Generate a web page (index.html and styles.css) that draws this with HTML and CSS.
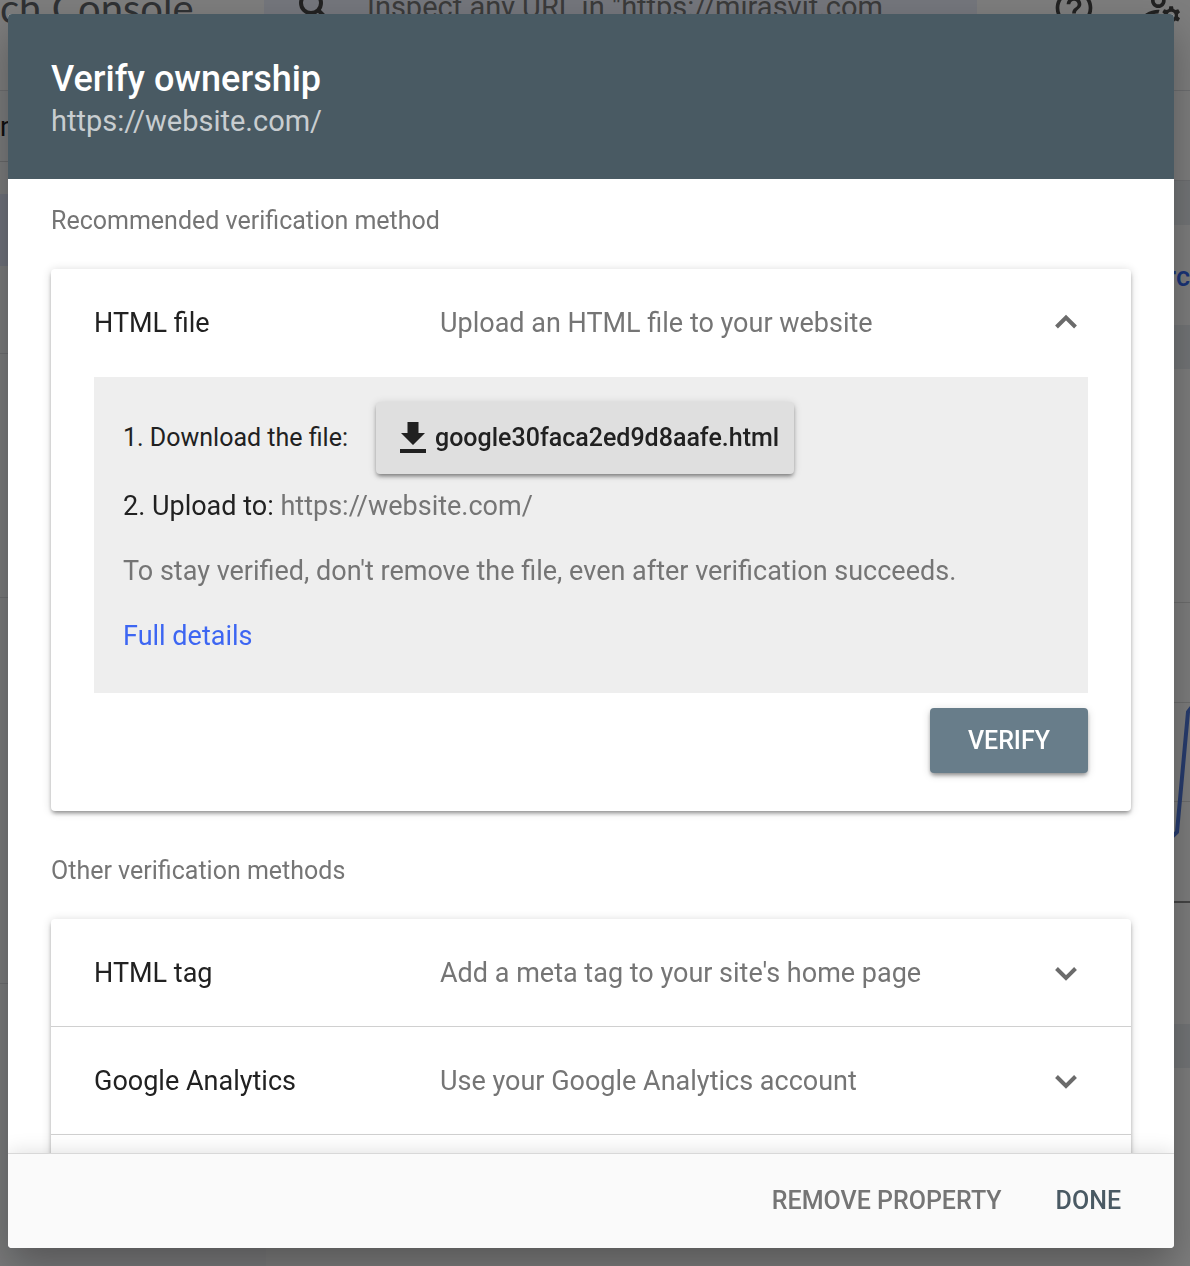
FILE: index.html
```html
<!DOCTYPE html>
<html lang="en">
<head>
<meta charset="utf-8">
<meta name="viewport" content="width=device-width, initial-scale=1">
<title>Verify ownership</title>
<link rel="stylesheet" href="styles.css">
</head>
<body>
<div class="app" aria-hidden="true">
  <header class="topbar">
    <div class="brand">ch Console</div>
    <div class="search">
      <svg class="search-icon" viewBox="0 0 30 30"><circle cx="12" cy="11" r="10"/><path d="M19 18l9 9"/></svg>
      <span class="search-text">Inspect any URL in "https://mirasvit.com</span>
    </div>
    <div class="tools">
      <svg class="tool-icon" viewBox="0 0 24 24"><path d="M11 18h2v-2h-2v2zm1-16C6.48 2 2 6.48 2 12s4.48 10 10 10 10-4.48 10-10S17.52 2 12 2zm0 18c-4.41 0-8-3.59-8-8s3.59-8 8-8 8 3.59 8 8-3.59 8-8 8zm0-14c-2.21 0-4 1.79-4 4h2c0-1.1.9-2 2-2s2 .9 2 2c0 2-3 1.75-3 5h2c0-2.25 3-2.5 3-5 0-2.21-1.79-4-4-4z"/></svg>
      <svg class="tool-icon" viewBox="0 0 24 24"><path d="M4 18v-.65c0-.34.16-.66.41-.81C6.1 15.53 8.03 15 10 15c.03 0 .05 0 .08.01.1-.7.3-1.37.59-1.98-.22-.02-.44-.03-.67-.03-2.42 0-4.68.67-6.61 1.82-.88.52-1.39 1.5-1.39 2.53V20h9.26c-.42-.6-.75-1.28-.97-2H4zM10 12c2.21 0 4-1.79 4-4s-1.79-4-4-4-4 1.79-4 4 1.79 4 4 4zm0-6c1.1 0 2 .9 2 2s-.9 2-2 2-2-.9-2-2 .9-2 2-2zM20.75 16c0-.22-.03-.42-.06-.63l1.14-1.01-1-1.73-1.45.49c-.32-.27-.68-.48-1.08-.63L18 11h-2l-.3 1.49c-.4.15-.76.36-1.08.63l-1.45-.49-1 1.73 1.14 1.01c-.03.21-.06.41-.06.63s.03.42.06.63l-1.14 1.01 1 1.73 1.45-.49c.32.27.68.48 1.08.63L16 21h2l.3-1.49c.4-.15.76-.36 1.08-.63l1.45.49 1-1.73-1.14-1.01c.03-.21.06-.41.06-.63zM17 18c-1.1 0-2-.9-2-2s.9-2 2-2 2 .9 2 2-.9 2-2 2z"/></svg>
    </div>
  </header>
  <div class="columns">
    <nav class="sidebar">
      <div class="property">n</div>
      <div class="nav-group"><div class="nav-active"></div></div>
      <div class="nav-group nav-tall"></div>
      <div class="nav-group nav-taller"></div>
    </nav>
    <main class="content">
      <div class="title-row"></div>
      <div class="band"></div>
      <div class="export">rc</div>
      <div class="band"></div>
      <div class="chart">
        <svg class="chart-line" viewBox="0 0 16 140"><path d="M-2 133L3 128 14 8 20 0"/></svg>
      </div>
      <div class="band"></div>
    </main>
  </div>
</div>

<div class="scrim">
  <section class="dialog" role="dialog" aria-modal="true" aria-labelledby="dialog-title">
    <header class="dialog-header">
      <h1 class="dialog-title" id="dialog-title">Verify ownership</h1>
      <p class="dialog-site">https://website.com/</p>
    </header>

    <div class="dialog-body">
      <h2 class="section-label">Recommended verification method</h2>
      <div class="card">
        <button class="method" type="button" aria-expanded="true">
          <span class="method-name">HTML file</span>
          <span class="method-info">Upload an HTML file to your website</span>
          <svg class="chevron" viewBox="0 0 24 24"><path d="M2.500 16L12 6.500l9.500 9.500"/></svg>
        </button>
        <div class="method-detail">
          <div class="instructions">
            <div class="download-row">
              <span>1. Download the file:</span>
              <button class="download" type="button">
                <svg class="download-icon" viewBox="0 0 26 32"><path d="M7.500 0h11v11H25L13 23 1 11h6.500zM0 27h26v4H0z"/></svg>
                google30faca2ed9d8aafe.html
              </button>
            </div>
            <p class="step">2. Upload to: <span class="muted">https://website.com/</span></p>
            <p class="note muted">To stay verified, don't remove the file, even after verification succeeds.</p>
            <p class="note"><a class="link" href="#details">Full details</a></p>
          </div>
          <button class="verify" type="button">VERIFY</button>
        </div>
      </div>

      <h2 class="section-label section-label-next">Other verification methods</h2>
      <div class="card">
        <button class="method method-closed" type="button" aria-expanded="false">
          <span class="method-name">HTML tag</span>
          <span class="method-info">Add a meta tag to your site's home page</span>
          <svg class="chevron" viewBox="0 0 24 24"><path d="M2.500 7.500L12 17l9.500-9.500"/></svg>
        </button>
        <button class="method method-closed" type="button" aria-expanded="false">
          <span class="method-name">Google Analytics</span>
          <span class="method-info">Use your Google Analytics account</span>
          <svg class="chevron" viewBox="0 0 24 24"><path d="M2.500 7.500L12 17l9.500-9.500"/></svg>
        </button>
        <div class="method"></div>
      </div>
    </div>

    <footer class="dialog-footer">
      <button class="action" type="button">REMOVE PROPERTY</button>
      <button class="action action-primary" type="button">DONE</button>
    </footer>
  </section>
</div>
</body>
</html>
```
FILE: styles.css
```css
* {
  box-sizing: border-box;
}

body {
  margin: 0;
  height: 100vh;
  overflow: hidden;
  font-family: Roboto, "Liberation Sans", sans-serif;
  font-size: 27px;
  line-height: 32px;
  color: #212121;
}

h1,
h2,
p {
  margin: 0;
  font-weight: 400;
}

button {
  font: inherit;
  color: inherit;
  border: 0;
  background: none;
  cursor: pointer;
}

/* Page behind the dialog */

.app {
  display: flex;
  flex-direction: column;
  min-height: 100vh;
  background: #fafafa;
}

.topbar {
  display: flex;
  align-items: flex-start;
  height: 91px;
  border-bottom: 1px solid #dadce0;
}

.brand {
  width: 264px;
  font-family: Lato, sans-serif;
  font-size: 40px;
  line-height: 16px;
  white-space: nowrap;
  color: #5f6368;
}

.search {
  flex: 1;
  display: flex;
  align-items: flex-start;
  gap: 38px;
  height: 56px;
  padding-left: 35px;
  background: #e9edf8;
}

.search-icon {
  flex: none;
  width: 30px;
  height: 30px;
  margin-top: -8px;
  fill: none;
  stroke: #444;
  stroke-width: 4;
}

.search-text {
  line-height: 14px;
  font-size: 29px;
  white-space: nowrap;
  color: #757575;
}

.tools {
  display: flex;
  gap: 44px;
  width: 213px;
  padding-left: 75px;
}

.tool-icon {
  flex: none;
  width: 44px;
  height: 44px;
  margin-top: -14px;
  fill: #444;
}

.columns {
  flex: 1;
  display: flex;
}

.sidebar {
  width: 266px;
  background: #f4f5f7;
}

.property {
  height: 71px;
  padding-top: 20px;
  border-bottom: 1px solid #cfd1d4;
}

.nav-group {
  height: 192px;
  padding-top: 32px;
  border-bottom: 1px solid #dadce0;
}

.nav-tall {
  height: 244px;
}

.nav-taller {
  height: 386px;
}

.nav-active {
  height: 72px;
  background: #dde3f5;
}

.content {
  flex: 1;
}

.title-row {
  height: 90px;
  border-bottom: 1px solid #dadce0;
}

.band {
  height: 44px;
  background: #e6eaee;
}

.export {
  height: 100px;
  padding-top: 36px;
  text-align: right;
  font-size: 27px;
  font-weight: 500;
  color: #3367f0;
}

.chart {
  display: flex;
  justify-content: flex-end;
  height: 655px;
  padding-top: 335px;
  background: linear-gradient(#dadada 0 0) 0 233px / 100% 1px no-repeat,
    linear-gradient(#dadada 0 0) 0 333px / 100% 1px no-repeat,
    linear-gradient(#dadada 0 0) 0 432px / 100% 1px no-repeat,
    linear-gradient(#8a8a8a 0 0) 0 532px / 100% 2px no-repeat;
}

.chart-line {
  width: 16px;
  height: 140px;
  fill: none;
  stroke: #4f78dc;
  stroke-width: 4;
}

/* Dialog */

.scrim {
  position: fixed;
  inset: 0;
  display: flex;
  padding: 14px 16px 18px 8px;
  background: rgba(0, 0, 0, 0.5);
}

.dialog {
  flex: 1;
  display: flex;
  flex-direction: column;
  min-width: 0;
  overflow: hidden;
  border-radius: 4px;
  background: #fff;
  box-shadow: 0 18px 40px rgba(0, 0, 0, 0.3);
}

.dialog-header {
  padding: 43px 43px 38px;
  color: #fff;
  background: #495a63;
}

.dialog-title {
  font-size: 36px;
  font-weight: 500;
  line-height: 44px;
}

.dialog-site {
  font-size: 29px;
  line-height: 40px;
  color: #c8cdd0;
}

.dialog-body {
  flex: 1;
  min-height: 0;
  padding: 26px 43px 0;
  overflow-y: auto;
  scrollbar-width: none;
}

.section-label {
  margin-bottom: 32px;
  font-size: 25px;
  color: #757575;
}

.section-label-next {
  margin-top: 44px;
}

.card {
  border-radius: 4px;
  background: #fff;
  box-shadow: 0 3px 4px -1px rgba(0, 0, 0, 0.4), 0 1px 10px rgba(0, 0, 0, 0.16);
}

.method {
  display: grid;
  grid-template-columns: 346px 1fr 24px;
  align-items: center;
  width: 100%;
  height: 108px;
  padding: 0 53px 0 43px;
  text-align: left;
}

.method-closed {
  border-bottom: 1px solid #d0d0d0;
}

.method-info,
.muted {
  color: #757575;
}

.chevron {
  width: 24px;
  height: 24px;
  fill: none;
  stroke: #6b6b6b;
  stroke-width: 4;
}

.method-detail {
  display: flex;
  flex-direction: column;
  gap: 15px;
  padding: 0 43px 38px;
}

.instructions {
  padding: 25px 29px 41px;
  background: #eee;
}

.download-row {
  display: flex;
  align-items: center;
  gap: 28px;
  font-size: 25px;
}

.download {
  display: flex;
  align-items: center;
  gap: 9px;
  height: 72px;
  padding: 0 15px 0 24px;
  border-radius: 4px;
  font-weight: 500;
  background: #dfdfdf;
  box-shadow: 0 3px 4px -1px rgba(0, 0, 0, 0.45), 0 1px 8px rgba(0, 0, 0, 0.14);
}

.download-icon {
  width: 26px;
  height: 32px;
  fill: #212121;
}

.step {
  margin-top: 16px;
}

.note {
  margin-top: 33px;
}

.link {
  color: #3d66f2;
  text-decoration: none;
}

.verify {
  align-self: flex-end;
  height: 65px;
  padding: 0 38px;
  border-radius: 4px;
  font-size: 25px;
  font-weight: 500;
  color: #fff;
  background: #687d8a;
  box-shadow: 0 3px 4px -1px rgba(0, 0, 0, 0.4), 0 2px 8px rgba(0, 0, 0, 0.16);
}

.dialog-footer {
  position: relative;
  display: flex;
  align-items: center;
  justify-content: flex-end;
  gap: 54px;
  height: 95px;
  padding: 0 53px;
  border-top: 1px solid #d8d8d8;
  background: #fafafa;
  box-shadow: 0 0 20px rgba(0, 0, 0, 0.14);
}

.action {
  padding: 0;
  font-size: 25px;
  font-weight: 500;
  color: #757575;
}

.action-primary {
  color: #4a5a64;
}
```
